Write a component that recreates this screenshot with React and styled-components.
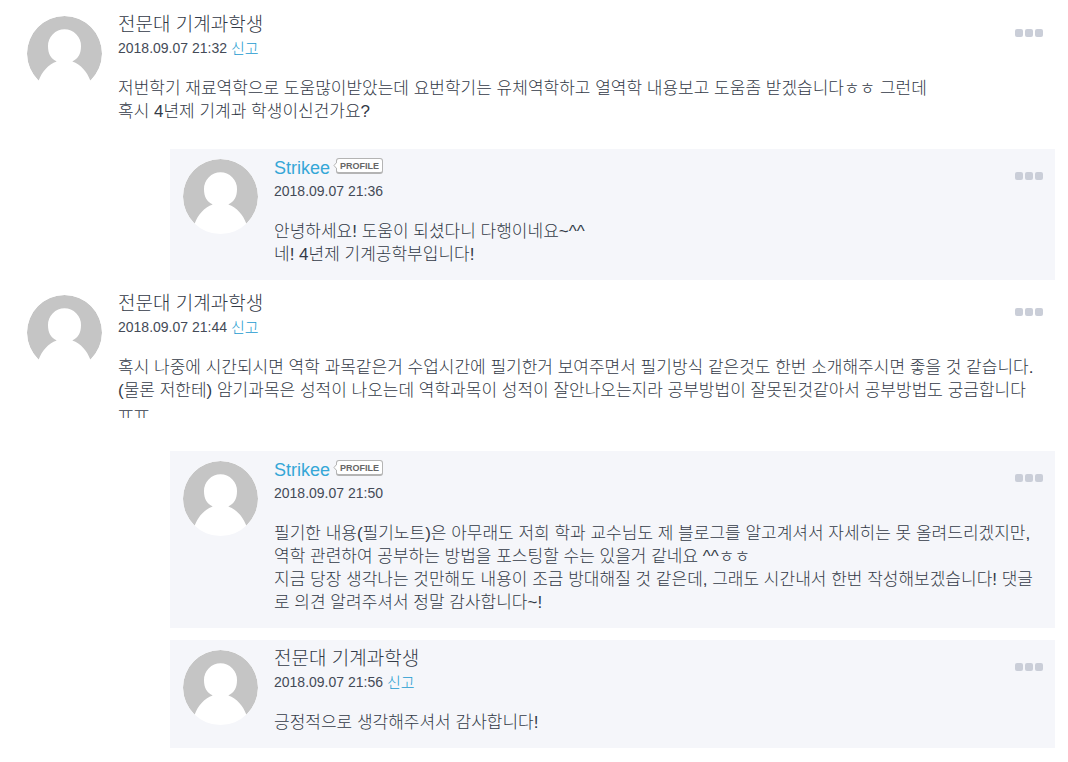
import React from "react";
import styled, { createGlobalStyle } from "styled-components";

const comments = [
  {
    id: 1,
    name: "전문대 기계과학생",
    date: "2018.09.07 21:32",
    text: "저번학기 재료역학으로 도움많이받았는데 요번학기는 유체역학하고 열역학 내용보고 도움좀 받겠습니다ㅎㅎ 그런데\n혹시 4년제 기계과 학생이신건가요?",
  },
  {
    id: 2,
    reply: true,
    owner: true,
    name: "Strikee",
    date: "2018.09.07 21:36",
    text: "안녕하세요! 도움이 되셨다니 다행이네요~^^\n네! 4년제 기계공학부입니다!",
  },
  {
    id: 3,
    name: "전문대 기계과학생",
    date: "2018.09.07 21:44",
    text: "혹시 나중에 시간되시면 역학 과목같은거 수업시간에 필기한거 보여주면서 필기방식 같은것도 한번 소개해주시면 좋을 것 같습니다.\n(물론 저한테) 암기과목은 성적이 나오는데 역학과목이 성적이 잘안나오는지라 공부방법이 잘못된것같아서 공부방법도 궁금합니다\nㅠㅠ",
  },
  {
    id: 4,
    reply: true,
    owner: true,
    name: "Strikee",
    date: "2018.09.07 21:50",
    text: "필기한 내용(필기노트)은 아무래도 저희 학과 교수님도 제 블로그를 알고계셔서 자세히는 못 올려드리겠지만,\n역학 관련하여 공부하는 방법을 포스팅할 수는 있을거 같네요 ^^ㅎㅎ\n지금 당장 생각나는 것만해도 내용이 조금 방대해질 것 같은데, 그래도 시간내서 한번 작성해보겠습니다! 댓글\n로 의견 알려주셔서 정말 감사합니다~!",
  },
  {
    id: 5,
    reply: true,
    name: "전문대 기계과학생",
    date: "2018.09.07 21:56",
    text: "긍정적으로 생각해주셔서 감사합니다!",
  },
];

const Avatar = () => (
  <AvatarIcon viewBox="0 0 75 75" aria-hidden="true">
    <path
      fill="#c5c5c5"
      d="M11.6 64.7A37.5 37.5 0 1 1 63.4 64.7C60 56 54 48.500 45.300 45.600C51 42.500 54 38 54 30A16.500 16.700 0 0 0 21 30C21 38 24 42.500 29.700 45.600C21 48.500 15 56 11.600 64.700Z"
    />
  </AvatarIcon>
);

const Comment = ({ comment }) => (
  <Item $reply={comment.reply}>
    <Avatar />
    <Content>
      <Header>
        <div>
          <NameRow>
            {comment.owner ? (
              <>
                <OwnerLink href="#profile">{comment.name}</OwnerLink>
                <ProfileBadge href="#profile">
                  <BadgeTail viewBox="0 0 4 7" aria-hidden="true">
                    <path d="M4 0L1 3.5L4 7" fill="#fff" stroke="#b4b4b4" />
                  </BadgeTail>
                  PROFILE
                </ProfileBadge>
              </>
            ) : (
              <GuestName>{comment.name}</GuestName>
            )}
          </NameRow>
          <Meta>
            <time>{comment.date}</time>
            {!comment.owner && <ReportLink href="#report">신고</ReportLink>}
          </Meta>
        </div>
        <MoreButton type="button" aria-label="더보기">
          <Dot />
          <Dot />
          <Dot />
        </MoreButton>
      </Header>
      <Text>{comment.text}</Text>
    </Content>
  </Item>
);

const App = () => {
  return (
    <>
      <GlobalStyle />
      <CommentList>
        {comments.map((comment) => (
          <Comment key={comment.id} comment={comment} />
        ))}
      </CommentList>
    </>
  );
};

const GlobalStyle = createGlobalStyle`
  body {
    margin: 0;
    background: #fff;
    color: #333a47;
    font-family: "Liberation Sans", "Noto Sans CJK KR", sans-serif;
    font-weight: 300;
  }
  a {
    color: #35a7d7;
    text-decoration: none;
  }
`;

const CommentList = styled.ul`
  display: flex;
  flex-direction: column;
  list-style: none;
  margin: 0;
  padding: 1px 13px 14px 14px;
`;

const Item = styled.li`
  display: flex;
  align-items: flex-start;
  gap: 16px;
  margin-top: ${(props) => (props.$reply ? "12px" : "5px")};
  margin-left: ${(props) => (props.$reply ? "156px" : "0")};
  padding: 7px 12px 14px 13px;
  background: ${(props) => (props.$reply ? "#f5f6fa" : "transparent")};
`;

const AvatarIcon = styled.svg`
  flex: none;
  width: 75px;
  height: 75px;
  margin-top: 3px;
  border-radius: 50%;
  background: #fff;
`;

const Content = styled.div`
  flex: 1;
  min-width: 0;
`;

const Header = styled.div`
  display: flex;
  justify-content: space-between;
  align-items: flex-start;
`;

const NameRow = styled.div`
  display: flex;
  align-items: center;
  gap: 6px;
  height: 24px;
`;

const GuestName = styled.span`
  font-size: 19px;
  line-height: 24px;
`;

const OwnerLink = styled.a`
  font-size: 18px;
  line-height: 24px;
`;

const ProfileBadge = styled.a`
  position: relative;
  box-sizing: border-box;
  height: 16px;
  margin-bottom: 4px;
  padding: 0 3px;
  border: 1px solid #b4b4b4;
  border-bottom-width: 2px;
  border-radius: 3px;
  background: #fff;
  color: #666;
  font-size: 9px;
  font-weight: 700;
  line-height: 14px;
`;

const BadgeTail = styled.svg`
  position: absolute;
  top: 3px;
  left: -4px;
  width: 4px;
  height: 7px;
`;

const Meta = styled.div`
  display: flex;
  align-items: center;
  gap: 4px;
  height: 23px;
  color: #444a57;
  font-size: 14px;
  line-height: 23px;
`;

const ReportLink = styled.a`
  color: #1b9bd0;
  font-size: 15px;
`;

const MoreButton = styled.button`
  display: flex;
  gap: 2px;
  margin: 12px 0 0;
  padding: 4px 0;
  border: 0;
  background: none;
  cursor: pointer;
`;

const Dot = styled.span`
  width: 8px;
  height: 8px;
  border-radius: 2px;
  background: #caced8;
`;

const Text = styled.p`
  margin: 17px 0 0;
  font-size: 17px;
  line-height: 23px;
  white-space: pre-line;
`;

export default App;
